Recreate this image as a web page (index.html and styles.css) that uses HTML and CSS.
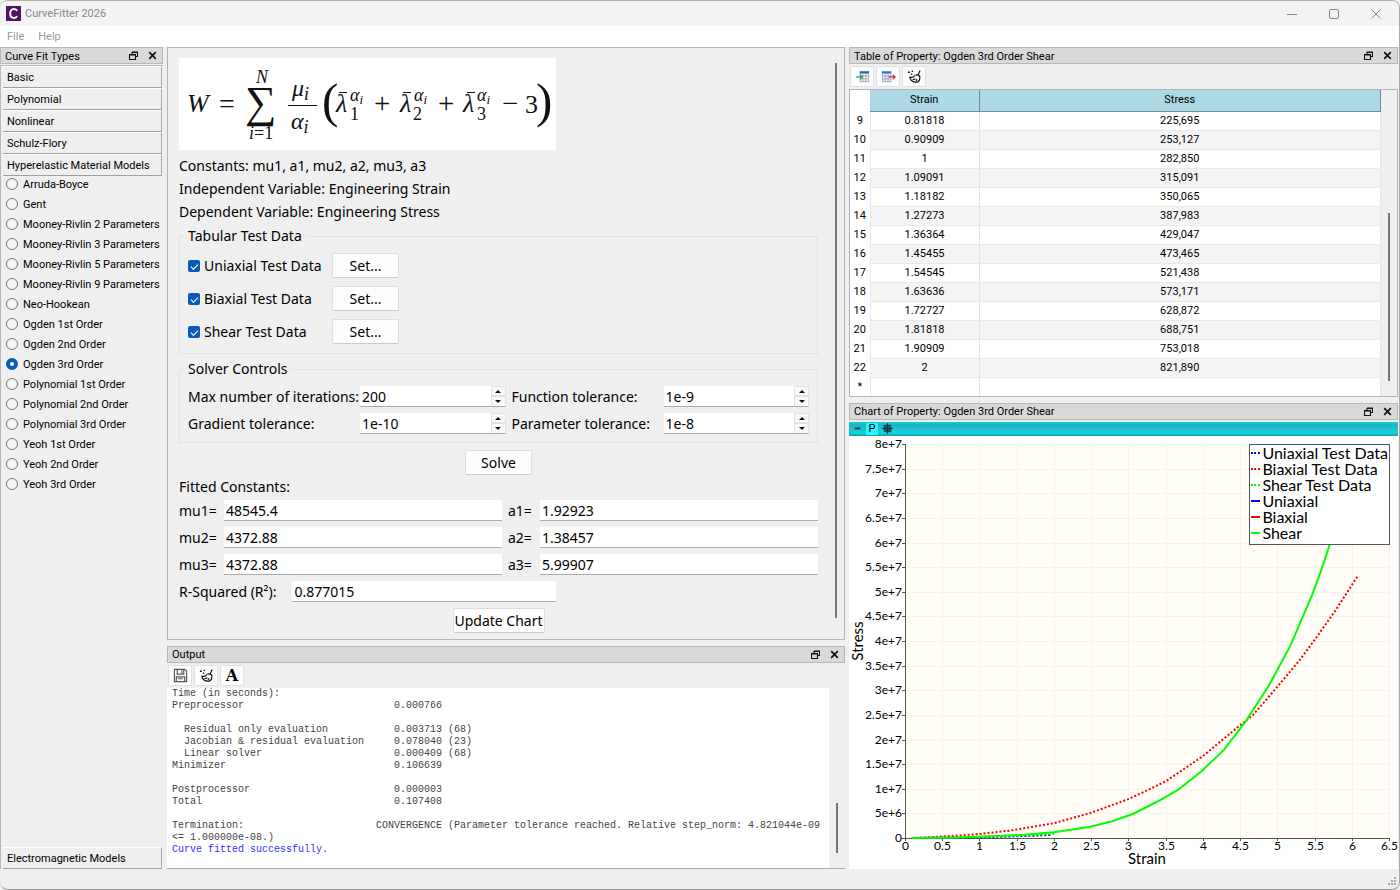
FILE: index.html
```html
<!DOCTYPE html>
<html lang="en">
<head>
  <meta charset="UTF-8">
  <meta name="viewport" content="width=device-width, initial-scale=1.0">
  <title>CurveFitter 2026</title>
  <link rel="stylesheet" href="styles.css">
</head>
<body>

<!-- Shared icons -->
<svg class="sprite" aria-hidden="true">
  <symbol id="float" viewBox="0 0 9 9">
    <path d="M3 1h5.500v4.500H6.500M3 1v2M3 1.500h5.500M.5 3.500h6v5h-6zM.5 4h6" fill="none" stroke="#111" stroke-width="1.100"/>
  </symbol>
  <symbol id="close" viewBox="0 0 9 9">
    <path d="M1.200 1.200l6.600 6.600M7.800 1.200L1.200 7.800" stroke="#111" stroke-width="1.700"/>
  </symbol>
  <symbol id="broom" viewBox="0 0 16 16">
    <path d="M14 1.500L12 6M9 6.500c2.500-.5 4.500.5 5 2.500M2.500 8.500c2.500 1 4.500.5 6-1.500M3 9c1 3.500 4 5.500 8 5 2-1 3-2.500 2.500-5M6 11.500l3-1M9.500 12.500l1.500-1.500" fill="none" stroke="#111" stroke-width="1.300"/>
    <path d="M1 3.500h2M5 2.500h1.500M4 5.500h1.500" stroke="#111" stroke-width="1.500"/>
  </symbol>
</svg>

<!-- Title bar -->
<header class="titlebar">
  <svg class="app-icon" viewBox="0 0 15 15"><rect width="15" height="15" fill="#4f1464"/><path d="M11 5C10 2.300 4.200 1.800 4.200 7.500S10 12.700 11 10" fill="none" stroke="#fff" stroke-width="1.900"/></svg>
  <h1>CurveFitter 2026</h1>
  <div class="window-buttons">
    <button aria-label="Minimize"><svg viewBox="0 0 10 10"><path d="M0 5.500h10" stroke="#888"/></svg></button>
    <button aria-label="Maximize"><svg viewBox="0 0 10 10"><rect x=".5" y=".5" width="9" height="9" rx="1.500" fill="none" stroke="#888"/></svg></button>
    <button aria-label="Close"><svg viewBox="0 0 10 10"><path d="M.5 .5l9 9M9.500 .5l-9 9" stroke="#888"/></svg></button>
  </div>
</header>

<nav class="menubar">
  <button>File</button>
  <button>Help</button>
</nav>

<main class="main">
  <!-- Curve fit types -->
  <aside class="dock sidebar">
    <div class="dock-title">
      <h2>Curve Fit Types</h2>
      <button aria-label="Float"><svg><use href="#float"/></svg></button>
      <button aria-label="Close"><svg><use href="#close"/></svg></button>
    </div>
    <div class="toolbox">
      <button class="tab">Basic</button>
      <button class="tab">Polynomial</button>
      <button class="tab">Nonlinear</button>
      <button class="tab">Schulz-Flory</button>
      <button class="tab">Hyperelastic Material Models</button>
      <div class="models">
        <label><input type="radio" name="model">Arruda-Boyce</label>
        <label><input type="radio" name="model">Gent</label>
        <label><input type="radio" name="model">Mooney-Rivlin 2 Parameters</label>
        <label><input type="radio" name="model">Mooney-Rivlin 3 Parameters</label>
        <label><input type="radio" name="model">Mooney-Rivlin 5 Parameters</label>
        <label><input type="radio" name="model">Mooney-Rivlin 9 Parameters</label>
        <label><input type="radio" name="model">Neo-Hookean</label>
        <label><input type="radio" name="model">Ogden 1st Order</label>
        <label><input type="radio" name="model">Ogden 2nd Order</label>
        <label><input type="radio" name="model" checked>Ogden 3rd Order</label>
        <label><input type="radio" name="model">Polynomial 1st Order</label>
        <label><input type="radio" name="model">Polynomial 2nd Order</label>
        <label><input type="radio" name="model">Polynomial 3rd Order</label>
        <label><input type="radio" name="model">Yeoh 1st Order</label>
        <label><input type="radio" name="model">Yeoh 2nd Order</label>
        <label><input type="radio" name="model">Yeoh 3rd Order</label>
      </div>
      <button class="tab">Electromagnetic Models</button>
    </div>
  </aside>

  <div class="center">
    <!-- Model form -->
    <section class="form-pane">
      <form class="form" onsubmit="return false">
        <svg class="formula" viewBox="0 0 377 92" role="img" aria-label="Ogden strain energy">
          <text class="it" x="8" y="54" font-size="26">W</text>
          <text x="40" y="55" font-size="28">=</text>
          <text class="it" x="77" y="25" font-size="18">N</text>
          <text x="66" y="59" font-size="44">∑</text>
          <text x="70" y="81" font-size="18"><tspan class="it">i</tspan>=1</text>
          <text class="it" x="113" y="38" font-size="24">μ<tspan dy="4" font-size="18">i</tspan></text>
          <path d="M109 47.500h29" stroke="#111"/>
          <text class="it" x="112" y="71" font-size="24">α<tspan dy="4" font-size="18">i</tspan></text>
          <text x="143" y="59" font-size="49">(</text>
          <path d="M160 34.500h8M224 34.500h8M288 34.500h8" stroke="#111"/>
          <text class="it" x="157" y="54" font-size="26">λ</text>
          <text class="it" x="171" y="43" font-size="18">α<tspan dy="3" font-size="13">i</tspan></text>
          <text x="171" y="62" font-size="18">1</text>
          <text x="195" y="55" font-size="29">+</text>
          <text class="it" x="221" y="54" font-size="26">λ</text>
          <text class="it" x="235" y="43" font-size="18">α<tspan dy="3" font-size="13">i</tspan></text>
          <text x="234" y="62" font-size="18">2</text>
          <text x="259" y="55" font-size="29">+</text>
          <text class="it" x="284" y="54" font-size="26">λ</text>
          <text class="it" x="298" y="43" font-size="18">α<tspan dy="3" font-size="13">i</tspan></text>
          <text x="298" y="62" font-size="18">3</text>
          <text x="323" y="55" font-size="29">−</text>
          <text x="346" y="55" font-size="26">3</text>
          <text x="357" y="59" font-size="49">)</text>
        </svg>
        <p>Constants: mu1, a1, mu2, a2, mu3, a3</p>
        <p>Independent Variable: Engineering Strain</p>
        <p>Dependent Variable: Engineering Stress</p>

        <fieldset class="test-data">
          <legend>Tabular Test Data</legend>
          <label><input type="checkbox" checked>Uniaxial Test Data</label><button class="btn">Set...</button>
          <label><input type="checkbox" checked>Biaxial Test Data</label><button class="btn">Set...</button>
          <label><input type="checkbox" checked>Shear Test Data</label><button class="btn">Set...</button>
        </fieldset>

        <fieldset class="solver">
          <legend>Solver Controls</legend>
          <label for="iterations">Max number of iterations:</label>
          <div class="spin"><input id="iterations" type="text" value="200"><button aria-label="Up"><i class="up"></i></button><button aria-label="Down"><i class="down"></i></button></div>
          <label for="ftol">Function tolerance:</label>
          <div class="spin"><input id="ftol" type="text" value="1e-9"><button aria-label="Up"><i class="up"></i></button><button aria-label="Down"><i class="down"></i></button></div>
          <label for="gtol">Gradient tolerance:</label>
          <div class="spin"><input id="gtol" type="text" value="1e-10"><button aria-label="Up"><i class="up"></i></button><button aria-label="Down"><i class="down"></i></button></div>
          <label for="ptol">Parameter tolerance:</label>
          <div class="spin"><input id="ptol" type="text" value="1e-8"><button aria-label="Up"><i class="up"></i></button><button aria-label="Down"><i class="down"></i></button></div>
        </fieldset>

        <button class="btn solve">Solve</button>

        <p>Fitted Constants:</p>
        <div class="constants">
          <label for="mu1">mu1=</label><input id="mu1" type="text" value="48545.4">
          <label for="a1">a1=</label><input id="a1" type="text" value="1.92923">
          <label for="mu2">mu2=</label><input id="mu2" type="text" value="4372.88">
          <label for="a2">a2=</label><input id="a2" type="text" value="1.38457">
          <label for="mu3">mu3=</label><input id="mu3" type="text" value="4372.88">
          <label for="a3">a3=</label><input id="a3" type="text" value="5.99907">
        </div>
        <div class="rsquared">
          <label for="r2">R-Squared (R²):</label><input id="r2" type="text" value="0.877015">
        </div>
        <button class="btn update">Update Chart</button>
      </form>
      <div class="scrollbar"><div class="thumb form-thumb"></div></div>
    </section>

    <!-- Output -->
    <section class="dock output">
      <div class="dock-title">
        <h2>Output</h2>
        <button aria-label="Float"><svg><use href="#float"/></svg></button>
        <button aria-label="Close"><svg><use href="#close"/></svg></button>
      </div>
      <div class="toolbar">
        <button aria-label="Save"><svg viewBox="0 0 16 16"><path d="M1.500 1.500h11l2 2v11h-13zM4.500 1.500v5h7v-5M9.500 2.500v3M3.500 14.500v-5h9v5M5.500 11.500h5" fill="none" stroke="#555" stroke-width="1.200"/></svg></button>
        <button aria-label="Clear"><svg><use href="#broom"/></svg></button>
        <button class="font-btn" aria-label="Font">A</button>
      </div>
      <div class="output-body">
<pre>Time (in seconds):
Preprocessor                         0.000766

  Residual only evaluation           0.003713 (68)
  Jacobian &amp; residual evaluation     0.078040 (23)
  Linear solver                      0.000409 (68)
Minimizer                            0.106639

Postprocessor                        0.000003
Total                                0.107408

Termination:                      CONVERGENCE (Parameter tolerance reached. Relative step_norm: 4.821044e-09 &lt;= 1.000000e-08.)
<span class="success">Curve fitted successfully.</span></pre>
        <div class="scrollbar"><div class="thumb output-thumb"></div></div>
      </div>
    </section>
  </div>

  <div class="right">
    <!-- Property table -->
    <section class="dock table-dock">
      <div class="dock-title">
        <h2>Table of Property: Ogden 3rd Order Shear</h2>
        <button aria-label="Float"><svg><use href="#float"/></svg></button>
        <button aria-label="Close"><svg><use href="#close"/></svg></button>
      </div>
      <div class="toolbar">
        <button aria-label="Import"><svg viewBox="0 0 16 16"><path d="M5.500 4.500h9v9h-9zM5.500 7.500h9M5.500 10.500h9M8.500 4v9.500M11.500 4v9.500" fill="none" stroke="#9aa5b1"/><path d="M5 3.500h10" stroke="#1d5fa8" stroke-width="2"/><path d="M1 8.500h7M5.500 6l2.500 2.500L5.500 11" fill="none" stroke="#2a9d62" stroke-width="1.300"/></svg></button>
        <button aria-label="Export"><svg viewBox="0 0 16 16"><path d="M1.500 4.500h9v9h-9zM1.500 7.500h9M1.500 10.500h9M4.500 4v9.500M7.500 4v9.500" fill="none" stroke="#8aa0c8"/><path d="M1 3.500h10" stroke="#2f6fd0" stroke-width="2"/><path d="M8 8.500h7M12.500 6l2.500 2.500-2.500 2.500" fill="none" stroke="#e02038" stroke-width="1.300"/></svg></button>
        <button aria-label="Clear"><svg><use href="#broom"/></svg></button>
      </div>
      <div class="table-body">
        <table>
          <thead>
            <tr><td class="corner"></td><th class="strain">Strain</th><th>Stress</th></tr>
          </thead>
          <tbody>
            <tr><th>9</th><td>0.81818</td><td>225,695</td></tr>
            <tr><th>10</th><td>0.90909</td><td>253,127</td></tr>
            <tr><th>11</th><td>1</td><td>282,850</td></tr>
            <tr><th>12</th><td>1.09091</td><td>315,091</td></tr>
            <tr><th>13</th><td>1.18182</td><td>350,065</td></tr>
            <tr><th>14</th><td>1.27273</td><td>387,983</td></tr>
            <tr><th>15</th><td>1.36364</td><td>429,047</td></tr>
            <tr><th>16</th><td>1.45455</td><td>473,465</td></tr>
            <tr><th>17</th><td>1.54545</td><td>521,438</td></tr>
            <tr><th>18</th><td>1.63636</td><td>573,171</td></tr>
            <tr><th>19</th><td>1.72727</td><td>628,872</td></tr>
            <tr><th>20</th><td>1.81818</td><td>688,751</td></tr>
            <tr><th>21</th><td>1.90909</td><td>753,018</td></tr>
            <tr><th>22</th><td>2</td><td>821,890</td></tr>
            <tr><th>*</th><td></td><td></td></tr>
          </tbody>
        </table>
        <div class="scrollbar"><div class="thumb table-thumb"></div></div>
      </div>
    </section>

    <!-- Property chart -->
    <section class="dock chart-dock">
      <div class="dock-title">
        <h2>Chart of Property: Ogden 3rd Order Shear</h2>
        <button aria-label="Float"><svg><use href="#float"/></svg></button>
        <button aria-label="Close"><svg><use href="#close"/></svg></button>
      </div>
      <div class="chart-bar">
        <button aria-label="Pin"><svg viewBox="0 0 12 12"><path d="M3 6h6" stroke="#163c42" stroke-width="2"/><path d="M3 6h2" stroke="#a33" stroke-width="2"/></svg></button>
        <button class="active">P</button>
        <button aria-label="Fit"><svg viewBox="0 0 12 12"><path d="M3 3h6v6H3z" fill="#1c5a60"/><path d="M6 0v12M0 6h12M2.500 2.500h7v7h-7z" fill="none" stroke="#0b3338"/></svg></button>
      </div>
      <div class="chart-body">
        <svg class="chart" id="chart"></svg>
        <ul class="legend">
          <li><i class="line dotted blue"></i>Uniaxial Test Data</li>
          <li><i class="line dotted red"></i>Biaxial Test Data</li>
          <li><i class="line dotted green"></i>Shear Test Data</li>
          <li><i class="line blue"></i>Uniaxial</li>
          <li><i class="line red"></i>Biaxial</li>
          <li><i class="line green"></i>Shear</li>
        </ul>
      </div>
    </section>
  </div>
</main>

<footer class="statusbar">
  <svg viewBox="0 0 9 9"><path d="M7 1h2M4 4h2M7 4h2M1 7h2M4 7h2M7 7h2" stroke="#aaa" stroke-width="2"/></svg>
</footer>

<script>
  // Stress values are in units of 1e6
  const biaxial = [[0.09, 0], [0.4, 0.2], [0.73, 0.5], [1.02, 0.85], [1.41, 1.5], [2, 3], [2.49, 5.07], [3, 7.9], [3.23, 9.5], [3.51, 11.6], [4, 16.6], [4.5, 22.9], [4.67, 24.9], [5, 30.7], [5.3, 36.1], [5.52, 40.6], [5.79, 46.4], [6.08, 53.2]];
  const shear = [[0.09, 0], [0.7, 0.1], [1.27, 0.4], [1.6, 0.65], [2, 1.15], [2.49, 2.3], [2.78, 3.4], [3.06, 4.87], [3.38, 7.3], [3.67, 9.8], [3.99, 13.65], [4.28, 17.85], [4.58, 23.8], [4.88, 30.8], [5.17, 38.9], [5.47, 49.4], [5.59, 54.4], [5.7, 59.4], [5.9, 69]];
  const uniaxialTest = [[0.1, 0], [1, 0.15], [1.5, 0.35], [1.97, 0.6]];
  const shearTest = [[0.1, 0], [1, 0.28], [1.5, 0.5], [2, 0.82]];

  const chart = document.getElementById('chart');

  function drawChart() {
    const w = chart.clientWidth;
    const h = chart.clientHeight;
    const left = 56, right = w - 9, top = 8, bottom = h - 31;
    const px = v => left + v / 6.5 * (right - left);
    const py = v => bottom - v / 80 * (bottom - top);
    let out = `<rect x="${left}" y="${top}" width="${right - left}" height="${bottom - top}" fill="#fffdf5"/>`;

    // Vertical grid lines and strain labels
    for (let i = 0; i <= 13; i++) {
      const x = Math.round(px(i / 2)) + 0.5;
      if (i) out += `<path class="grid" d="M${x} ${top}V${bottom}"/>`;
      out += `<path class="axis" d="M${x} ${bottom}v3"/><text class="tick" x="${x}" y="${bottom + 12}" text-anchor="middle">${i / 2}</text>`;
    }

    // Horizontal grid lines and stress labels
    for (let i = 0; i <= 16; i++) {
      const y = Math.round(py(i * 5)) + 0.5;
      const label = i === 0 ? '0' : i === 1 ? '5e+6' : `${i / 2}e+7`;
      if (i) out += `<path class="grid" d="M${left} ${y}H${right}"/>`;
      out += `<path class="axis" d="M${left - 3} ${y}h3"/><text class="tick" x="${left - 3}" y="${y + 3}" text-anchor="end">${label}</text>`;
    }

    out += `<path class="axis" d="M${left + 0.5} ${top}V${bottom + 0.5}H${right}"/>`;

    const line = (points, cls) => {
      const d = points.map(p => `${px(p[0]).toFixed(1)},${py(p[1]).toFixed(1)}`).join(' ');
      return `<polyline class="curve ${cls}" points="${d}"/>`;
    };
    out += line(uniaxialTest, 'blue dotted') + line(shearTest, 'green dotted') + line(biaxial, 'red dotted') + line(shear, 'green');

    out += `<text class="axis-title" x="${(left + right) / 2}" y="${h - 5}" text-anchor="middle">Strain</text>`;
    const mid = (top + bottom) / 2;
    out += `<text class="axis-title" transform="translate(14 ${mid}) rotate(-90)" text-anchor="middle">Stress</text>`;
    chart.innerHTML = out;
  }

  drawChart();
  window.addEventListener('resize', drawChart);
</script>

</body>
</html>
```
FILE: styles.css
```css
* {
  margin: 0;
  padding: 0;
  box-sizing: border-box;
}

html, body {
  height: 100%;
}

body {
  display: flex;
  flex-direction: column;
  background: #efefef;
  color: #000;
  font-family: Roboto, "Noto Sans", sans-serif;
  font-size: 11px;
  border-top: 1px solid #b5ada3;
  border-right: 1px solid #aaa;
  border-bottom: 1px solid #999;
  border-radius: 8px;
  overflow: hidden;
}

button, input {
  font: inherit;
  color: inherit;
}

button {
  border: none;
  background: none;
}

.sprite {
  display: none;
}

/* Title bar */
.titlebar {
  display: flex;
  align-items: center;
  height: 25px;
  padding: 0 18px 0 6px;
  background: #f3f3f3;
  color: #888;
}

.titlebar h1 {
  flex: 1;
  font-size: 11px;
  font-weight: normal;
}

.app-icon {
  width: 15px;
  height: 15px;
  margin-right: 4px;
}

.window-buttons {
  display: flex;
  gap: 32px;
}

.window-buttons svg {
  display: block;
  width: 10px;
  height: 10px;
}

.menubar {
  display: flex;
  gap: 14px;
  height: 21px;
  padding: 0 7px;
  background: #fff;
  color: #999;
}

/* Layout */
.main {
  flex: 1;
  display: grid;
  grid-template-columns: 163px minmax(0, 678fr) minmax(0, 549fr);
  gap: 4px;
  min-height: 0;
  padding-right: 1px;
}

.center, .right {
  display: flex;
  flex-direction: column;
  gap: 6px;
  min-height: 0;
}

.dock {
  display: flex;
  flex-direction: column;
  min-height: 0;
}

.dock-title {
  display: flex;
  align-items: center;
  gap: 10px;
  height: 17px;
  flex-shrink: 0;
  padding: 0 5px 0 4px;
  background: #d9d9d9;
  border: 1px solid #b8b8b8;
}

.dock-title h2 {
  flex: 1;
  padding-top: 1px;
  font-size: 11px;
  font-weight: normal;
  line-height: 15px;
  white-space: nowrap;
}

.dock-title svg {
  display: block;
  width: 9px;
  height: 9px;
}

/* Sidebar */
.toolbox {
  flex: 1;
  display: flex;
  flex-direction: column;
  margin-top: 1px;
  border-left: 1px solid #b8b8b8;
  border-top: 1px solid #b8b8b8;
}

.tab {
  height: 22px;
  padding: 0 4px;
  margin: 0 1px 0 2px;
  text-align: left;
  border-right: 1px solid #aaa;
  border-bottom: 1px solid #a0a0a0;
  border-top: 1px solid #fff;
}

.models {
  flex: 1;
  margin-top: -2px;
  padding-left: 5px;
}

.models label {
  display: flex;
  align-items: center;
  gap: 5px;
  height: 20px;
  white-space: nowrap;
}

.models input {
  appearance: none;
  flex-shrink: 0;
  width: 12px;
  height: 12px;
  background: #f5f5f5;
  border: 1px solid #777;
  border-radius: 50%;
}

.models input:checked {
  background: #fff;
  border: 4px solid #0a5ab8;
}

/* Form */
.form-pane {
  display: flex;
  flex: 593 1 0;
  min-height: 0;
  border: 1px solid #b4b4bc;
  overflow: hidden;
}

.form {
  flex: 1;
  padding: 10px 10px 0 11px;
  font-family: "Noto Sans", "Open Sans", sans-serif;
  font-size: 14px;
}

.form p {
  height: 23px;
  line-height: 23px;
}

.formula {
  display: block;
  width: 377px;
  height: 92px;
  margin-bottom: 4px;
  background: #fff;
  fill: #111;
  font-family: "Liberation Serif", serif;
}

.formula .it {
  font-style: italic;
}

fieldset {
  min-width: 0;
  border: 1px solid #e2e2e2;
  padding: 0 8px;
}

legend {
  height: 22px;
  line-height: 22px;
  padding: 0 4px;
  margin-left: -4px;
}

.test-data {
  display: grid;
  grid-template-columns: 136px auto;
  justify-content: start;
  align-items: center;
  gap: 8px;
  padding-top: 6px;
  padding-bottom: 9px;
  margin: 2px 0 4px;
}

.test-data label {
  display: flex;
  align-items: center;
  gap: 4px;
  white-space: nowrap;
}

.test-data input {
  appearance: none;
  width: 12px;
  height: 12px;
  background: #0a5ab8;
  border-radius: 2px;
}

.test-data input::before {
  content: "";
  display: block;
  width: 6px;
  height: 3px;
  margin: 4px 3px;
  border-left: 1px solid #fff;
  border-bottom: 1px solid #fff;
  transform: rotate(-45deg);
}

.btn {
  display: block;
  width: 67px;
  height: 25px;
  background: #fdfdfd;
  border: 1px solid #ddd;
  border-bottom-color: #ccc;
  border-radius: 2px;
}

.solver {
  display: grid;
  grid-template-columns: 166px minmax(0, 1fr) 146px minmax(0, 1fr);
  align-items: center;
  gap: 6px;
  padding-top: 6px;
  padding-bottom: 8px;
  margin-bottom: 7px;
  white-space: nowrap;
}

.form input[type="text"] {
  width: 100%;
  min-width: 0;
  height: 21px;
  padding: 0 2px;
  background: #fff;
  border: none;
  border-bottom: 1px solid #aaa;
}

.spin {
  display: grid;
  grid-template-columns: 1fr 15px;
  grid-template-rows: 10px 11px;
  background: #fff;
}

.spin input {
  grid-row: span 2;
}

.spin button {
  display: flex;
  align-items: center;
  justify-content: center;
  background: #f9f9f9;
  border: 1px solid #e2e2e2;
}

.spin button:last-child {
  border-bottom-color: #aaa;
}

.up, .down {
  border-left: 3px solid transparent;
  border-right: 3px solid transparent;
}

.up {
  border-bottom: 3px solid #111;
}

.down {
  border-top: 3px solid #111;
}

.solve, .update {
  margin: 0 auto;
}

.update {
  width: 92px;
  white-space: nowrap;
}

.constants {
  display: grid;
  grid-template-columns: 39px minmax(0, 1fr) 26px minmax(0, 1fr);
  align-items: center;
  gap: 6px;
  margin-top: 2px;
}

.rsquared {
  display: flex;
  align-items: center;
  gap: 16px;
  width: 377px;
  margin: 6px 0;
  white-space: nowrap;
}

/* Scrollbars */
.scrollbar {
  display: flex;
  justify-content: center;
  width: 16px;
  flex-shrink: 0;
  background: #efefef;
}

.thumb {
  width: 2px;
  background: #777;
}

.form-thumb {
  height: 94%;
  margin-top: 15px;
}

.output-thumb {
  height: 28%;
  align-self: flex-end;
  margin-bottom: 15px;
}

.table-thumb {
  height: 55%;
  align-self: flex-end;
  margin-bottom: 15px;
}

/* Toolbars */
.toolbar {
  display: flex;
  gap: 2px;
  height: 25px;
  flex-shrink: 0;
  padding: 2px 0 2px 1px;
}

.toolbar button {
  display: flex;
  align-items: center;
  justify-content: center;
  width: 24px;
  background: #fdfdfd;
  border: 1px solid #e0e0e0;
  border-radius: 2px;
}

.toolbar svg {
  width: 15px;
  height: 15px;
}

.toolbar .font-btn {
  font-family: "DejaVu Serif", serif;
  font-size: 16px;
  font-weight: bold;
}

/* Output */
.output {
  flex: 224 1 0;
}

.output-body {
  flex: 1;
  display: flex;
  min-height: 0;
  background: #fff;
  border-bottom: 1px solid #aaa;
  overflow: hidden;
}

pre {
  flex: 1;
  padding-left: 5px;
  font-family: "Liberation Mono", monospace;
  font-size: 10px;
  line-height: 12px;
  white-space: pre-wrap;
  color: #444;
}

.success {
  color: #33f;
}

/* Table */
.table-dock {
  flex: 350 1 0;
}

.table-body {
  flex: 1;
  display: flex;
  min-height: 0;
  border: 1px solid #b4b4bc;
  background: #fff;
  overflow: hidden;
}

table {
  flex: 1;
  table-layout: fixed;
  border-collapse: collapse;
  text-align: center;
  font-size: 11px;
  line-height: 14px;
}

tr {
  height: 19px;
}

thead tr {
  height: 21px;
}

th {
  font-weight: normal;
}

thead th {
  background: #add8e6;
  border-right: 1px solid #6b8b97;
  border-bottom: 1px solid #6b8b97;
}

.corner {
  width: 20px;
}

.strain {
  width: 109px;
}

tbody td {
  border-right: 1px solid #e4e4e4;
  border-bottom: 1px solid #e9e9e9;
}

tbody th {
  border-right: 1px solid #e9e9e9;
}

tbody tr:nth-child(even) td {
  background: #f4f4f4;
}

/* Chart */
.chart-dock {
  flex: 467 1 0;
}

.chart-bar {
  display: flex;
  align-items: center;
  gap: 3px;
  height: 14px;
  flex-shrink: 0;
  margin-top: 2px;
  padding-left: 2px;
  background: linear-gradient(#0ed0dc, #1cb4bd 20%, #18d2dc 80%, #0a9fa8);
}

.chart-bar button {
  display: flex;
  align-items: center;
  justify-content: center;
  width: 12px;
  height: 12px;
  font-size: 11px;
  line-height: 12px;
}

.chart-bar .active {
  background: #2af4ff;
}

.chart-bar svg {
  width: 11px;
  height: 11px;
}

.chart-body {
  position: relative;
  flex: 1;
  min-height: 0;
  background: #fff;
  font-family: Lato, sans-serif;
}

.chart {
  display: block;
  width: 100%;
  height: 100%;
}

.grid {
  stroke: #f3f3ef;
}

.axis {
  fill: none;
  stroke: #555;
}

.tick {
  font-size: 12px;
}

.axis-title {
  font-size: 15px;
}

.curve {
  fill: none;
  stroke-width: 2;
}

.curve.dotted {
  stroke-dasharray: 2 2;
}

.curve.red {
  stroke: #f00;
}

.curve.green {
  stroke: #0f0;
}

.curve.blue {
  stroke: #00f;
}

/* Legend lies over the plot area */
.legend {
  position: absolute;
  top: 8px;
  right: 8px;
  padding: 0 1px 3px;
  background: #fff;
  border: 1px solid #555;
  list-style: none;
  font-size: 16px;
}

.legend li {
  display: flex;
  align-items: center;
  gap: 2px;
  height: 16px;
  line-height: 16px;
  white-space: nowrap;
}

.line {
  width: 9px;
  border-top: 2px solid;
}

.line.dotted {
  border-top-style: dotted;
}

.line.red {
  border-color: #f00;
}

.line.green {
  border-color: #0f0;
}

.line.blue {
  border-color: #00f;
}

/* Status bar */
.statusbar {
  display: flex;
  justify-content: flex-end;
  align-items: flex-end;
  height: 20px;
  padding: 3px;
}

.statusbar svg {
  width: 9px;
  height: 9px;
}
```
